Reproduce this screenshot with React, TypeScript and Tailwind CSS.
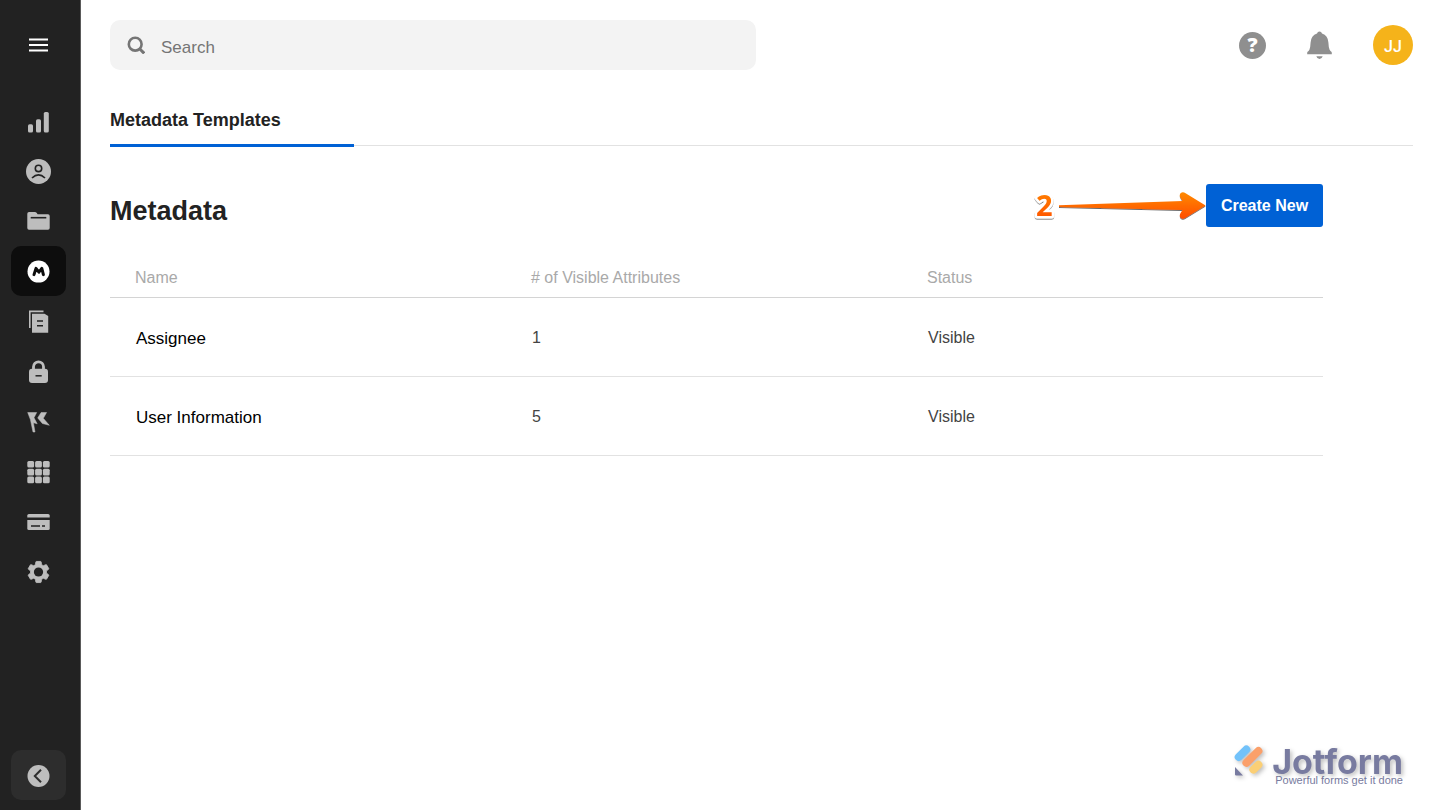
import type { ReactNode } from "react";

const navItems: { label: string; active?: boolean; icon: ReactNode }[] = [
  {
    label: "Reports",
    icon: (
      <g fill="currentColor">
        <rect x="3" y="17.3" width="5" height="8.2" rx="1.6" />
        <rect x="11" y="12.3" width="5" height="13.2" rx="1.6" />
        <rect x="18.8" y="5" width="5" height="20.5" rx="1.6" />
      </g>
    ),
  },
  {
    label: "Users",
    icon: (
      <>
        <circle cx="13.5" cy="14.5" r="12.5" fill="currentColor" />
        <circle cx="13.5" cy="11.4" r="3.2" fill="none" stroke="#222" strokeWidth="1.6" />
        <path d="M7 21Q13.5 14.8 20 21" fill="none" stroke="#222" strokeWidth="1.7" />
      </>
    ),
  },
  {
    label: "Folders",
    icon: (
      <>
        <path
          d="M4 5H9.8Q11 5 11.8 6L12.6 7.2H23Q24.7 7.2 24.7 9V21Q24.7 22.8 23 22.8H4Q2.3 22.8 2.3 21V6.8Q2.3 5 4 5Z"
          fill="currentColor"
        />
        <path d="M5.7 10.7H21.3" stroke="#222" strokeWidth="1.6" />
      </>
    ),
  },
  {
    label: "Metadata",
    active: true,
    icon: (
      <>
        <circle cx="13.5" cy="14.6" r="11" fill="currentColor" />
        <path
          d="M9 17.6L11 11.4L13.9 15.2L16.8 11.4L18.4 17.6"
          fill="none"
          stroke="#0d0d0d"
          strokeWidth="3"
          strokeLinecap="round"
          strokeLinejoin="round"
        />
      </>
    ),
  },
  {
    label: "Documents",
    icon: (
      <>
        <path d="M4.8 21V4.4H18.5" fill="none" stroke="currentColor" strokeWidth="1.6" />
        <path d="M7 6.7H19.5L23.2 9V25.8H7Z" fill="currentColor" />
        <path d="M12 14H18M12 18.8H18" stroke="#222" strokeWidth="1.5" />
      </>
    ),
  },
  {
    label: "Security",
    icon: (
      <>
        <path d="M8.5 13V9.8a5 5 0 0 1 10 0V13" fill="none" stroke="currentColor" strokeWidth="2.8" />
        <rect x="4" y="11.8" width="19" height="14.2" rx="3" fill="currentColor" />
        <path d="M10.5 18.8H16.7" stroke="#222" strokeWidth="1.5" />
      </>
    ),
  },
  {
    label: "Campaigns",
    icon: (
      <g fill="currentColor" stroke="currentColor" strokeWidth="0.5" strokeLinejoin="round">
        <path d="M2.7 5.5H11.7L9 10.7L12.2 16.8L8.4 15.8L10 25H8L5.4 12.6Z" />
        <path d="M16.1 5.5H21.6L18.3 11.3L24.3 18.3L17.4 16.5L12.7 10.9Z" />
      </g>
    ),
  },
  {
    label: "Apps",
    icon: (
      <g fill="currentColor">
        {[4, 11.8, 19.6].map((y) =>
          [2.3, 10.1, 17.9].map((x) => (
            <rect key={`${x}-${y}`} x={x} y={y} width="6.8" height="6.6" rx="1.5" />
          ))
        )}
      </g>
    ),
  },
  {
    label: "Billing",
    icon: (
      <>
        <path d="M2.3 10.4V8.6Q2.3 7 3.9 7H23.1Q24.7 7 24.7 8.6V10.4Z" fill="currentColor" />
        <path d="M2.3 13H24.7V21.4Q24.7 23 23.1 23H3.9Q2.3 23 2.3 21.4Z" fill="currentColor" />
        <path d="M6 19H15M17 19H20" stroke="#222" strokeWidth="1.6" />
      </>
    ),
  },
  {
    label: "Settings",
    icon: (
      <g transform="translate(0.3 1.8) scale(1.1)">
        <path
          d="M19.14 12.94c.04-.3.06-.61.06-.94 0-.32-.02-.64-.07-.94l2.03-1.58a.49.49 0 0 0 .12-.61l-1.92-3.32a.49.49 0 0 0-.59-.22l-2.39.96a7.03 7.03 0 0 0-1.62-.94l-.36-2.54a.48.48 0 0 0-.48-.41h-3.84a.47.47 0 0 0-.47.41l-.36 2.54c-.59.24-1.13.57-1.62.94l-2.39-.96a.48.48 0 0 0-.59.22L2.74 8.87a.47.47 0 0 0 .12.61l2.03 1.58c-.05.3-.09.63-.09.94s.02.64.07.94l-2.03 1.58a.49.49 0 0 0-.12.61l1.92 3.32c.12.22.37.29.59.22l2.39-.96c.5.38 1.03.7 1.62.94l.36 2.54c.05.24.24.41.48.41h3.84c.24 0 .44-.17.47-.41l.36-2.54a6.8 6.8 0 0 0 1.62-.94l2.39.96c.22.08.47 0 .59-.22l1.92-3.32a.47.47 0 0 0-.12-.61z"
          fill="currentColor"
          stroke="currentColor"
          strokeWidth="0.8"
        />
        <circle cx="12" cy="12" r="4.2" fill="#222" />
      </g>
    ),
  },
];

const templates = [
  { name: "Assignee", attributes: 1, status: "Visible" },
  { name: "User Information", attributes: 5, status: "Visible" },
];

function Sidebar() {
  return (
    <aside className="w-[81px] shrink-0 bg-[#222] border-r border-[#5a5a5a] pl-[11px] pr-[14px] pb-[10px] flex flex-col">
      <button type="button" aria-label="Menu" className="h-[90px] flex items-center justify-center text-white">
        <svg viewBox="0 0 19 14" className="w-[19px] h-[14px]" stroke="currentColor" strokeWidth="2">
          <path d="M0 1.5H19M0 7H19M0 12.5H19" />
        </svg>
      </button>
      <nav className="mt-[6px]">
        {navItems.map((item) => (
          <a
            key={item.label}
            href="#"
            aria-label={item.label}
            className={`h-[50px] rounded-[10px] flex items-center justify-center ${
              item.active ? "bg-[#0d0d0d] text-white" : "text-[#bdbdbd]"
            }`}
          >
            <svg viewBox="0 0 27 28" className="w-[27px] h-7">
              {item.icon}
            </svg>
          </a>
        ))}
      </nav>
      <button
        type="button"
        aria-label="Collapse sidebar"
        className="mt-auto h-[50px] rounded-[10px] bg-[#2d2d2d] text-[#bdbdbd] flex items-center justify-center"
      >
        <svg viewBox="0 0 24 24" className="w-6 h-6">
          <circle cx="11.5" cy="13" r="11" fill="currentColor" />
          <path d="M14 6.8L7.8 13L14 19.2" fill="none" stroke="#2d2d2d" strokeWidth="2" />
        </svg>
      </button>
    </aside>
  );
}

function TopBar() {
  return (
    <header className="h-[90px] flex items-center justify-between gap-10">
      <label className="flex items-center gap-4 w-full max-w-[646px] h-[50px] rounded-[10px] bg-[#f3f3f3] pl-[17px] pr-4">
        <svg viewBox="0 0 18 18" className="w-[18px] h-[18px] shrink-0 text-[#757575]" fill="none" stroke="currentColor">
          <circle cx="8.2" cy="8.2" r="6.4" strokeWidth="2.6" />
          <path d="M12.6 12.8L17.2 17.4" strokeWidth="3" />
        </svg>
        <input
          type="text"
          placeholder="Search"
          aria-label="Search"
          className="w-full h-full pt-1.5 bg-transparent outline-none text-[17px] placeholder:text-[#757575]"
        />
      </label>
      <div className="flex items-center gap-[41px] shrink-0">
        <button
          type="button"
          aria-label="Help"
          className="w-[27px] h-[27px] rounded-full bg-[#8f8f8f] text-white text-xl leading-5 font-extrabold flex items-center justify-center font-['Open_Sans',sans-serif]"
        >
          ?
        </button>
        <button type="button" aria-label="Notifications" className="text-[#8f8f8f]">
          <svg viewBox="0 0 25 28" className="w-[25px] h-7" fill="currentColor">
            <path d="M12.5 0.6Q14.4 0.6 15 2.6Q21 4.7 21.4 11.5Q21.6 16.5 22.6 18.8Q23.4 20.3 24.4 20.8Q24.8 21 24.8 22V23.2H0.2V22Q0.2 21 0.6 20.8Q1.6 20.3 2.4 18.8Q3.4 16.5 3.6 11.5Q4 4.7 10 2.6Q10.6 0.6 12.5 0.6Z" />
            <path d="M9.3 25.2H15.7Q14.8 28 12.5 28Q10.2 28 9.3 25.2Z" />
          </svg>
        </button>
        <button
          type="button"
          aria-label="Account"
          className="w-10 h-10 pt-[3px] rounded-full bg-[#f5b31a] text-white text-base font-medium font-['Roboto',sans-serif]"
        >
          JJ
        </button>
      </div>
    </header>
  );
}

function StepArrow() {
  return (
    <svg viewBox="0 -4 173 43" className="w-[173px] h-[43px]" role="img" aria-label="Step 2">
      <defs>
        <linearGradient id="arrowFill" x1="0" y1="0" x2="0" y2="1">
          <stop offset="0" stopColor="#ff8a00" />
          <stop offset="1" stopColor="#ff4d00" />
        </linearGradient>
        <filter id="arrowShadow" x="-10%" y="-20%" width="120%" height="150%">
          <feDropShadow dx="0" dy="1" stdDeviation="0.6" floodColor="#000" floodOpacity="0.6" />
        </filter>
      </defs>
      <g filter="url(#arrowShadow)" fill="url(#arrowFill)">
        <text
          x="3"
          y="28"
          className="text-[29px] font-bold font-['Open_Sans',sans-serif]"
          stroke="#fff"
          strokeWidth="5"
          strokeLinejoin="round"
          paintOrder="stroke"
        >
          2
        </text>
        <path d="M26 17.3L149.5 13.1L147.6 10.1Q145.8 6.9 147.8 5.1Q149.8 3.5 152.6 5.3L172.6 17.5L152.6 29.7Q149.8 31.5 147.8 29.9Q145.8 28.1 147.6 25.1L149.5 22.1L26 18.9Z" />
      </g>
    </svg>
  );
}

function JotformMark() {
  return (
    <div className="mt-auto self-end mr-[10px] mb-6 flex items-start text-[#787ba0]">
      <svg
        viewBox="0 0 30 32"
        className="w-[30px] h-8 drop-shadow-[2px_2px_2px_rgba(0,0,0,0.25)]"
        fill="none"
        strokeLinecap="round"
      >
        <path d="M4.7 12L12.3 4.5" stroke="#72c2fa" strokeWidth="8" />
        <path d="M12.4 17.8L24.4 6" stroke="#fba06a" strokeWidth="8" />
        <path d="M19.4 24.6L24.4 19.8" stroke="#fbcf75" strokeWidth="8" />
        <path d="M1 22L9 30.4H1.8Q1 30.4 1 29.6Z" fill="#787ba0" />
      </svg>
      <div className="ml-2 flex flex-col items-end">
        <span className="h-[29px] text-[34px] leading-[33px] font-bold font-['Inter',sans-serif] drop-shadow-[2px_2px_2px_rgba(0,0,0,0.25)]">
          Jotform
        </span>
        <span className="text-[11px] leading-3">Powerful forms get it done</span>
      </div>
    </div>
  );
}

export default function App() {
  return (
    <div className="min-h-screen flex bg-white text-[#222] font-['Liberation_Sans',Arial,sans-serif]">
      <Sidebar />
      <main className="flex-1 min-w-0 flex flex-col pl-[29px] pr-[27px]">
        <TopBar />
        <div className="h-14 border-b border-[#e2e2e2] flex" role="tablist">
          <button
            type="button"
            role="tab"
            aria-selected="true"
            className="w-[244px] h-[57px] pt-1.5 border-b-3 border-[#0061d5] text-left text-[18px] font-bold"
          >
            Metadata Templates
          </button>
        </div>

        <section className="pt-[38px] pr-[90px]">
          <div className="flex items-center justify-between">
            <h1 className="text-[27px] leading-8 font-bold pt-[10px]">Metadata</h1>
            <div className="flex items-center">
              <StepArrow />
              <button type="button" className="w-[117px] h-[43px] rounded-[3px] bg-[#0061d5] text-white text-base font-bold">
                Create New
              </button>
            </div>
          </div>

          <table className="mt-[30px] w-full table-fixed text-left text-base">
            <thead>
              <tr className="h-10 border-b border-[#d4d4d4] text-[#a9a9a9]">
                <th className="w-[396px] pl-[25px] pt-[3px] font-normal">Name</th>
                <th className="w-[396px] pl-[25px] pt-[3px] font-normal"># of Visible Attributes</th>
                <th className="pl-[25px] pt-[3px] font-normal">Status</th>
              </tr>
            </thead>
            <tbody>
              {templates.map((row) => (
                <tr key={row.name} className="h-[79px] border-b border-[#e2e2e2] text-[#444]">
                  <td className="pl-[26px] pt-1 text-[17px] text-black">{row.name}</td>
                  <td className="pl-[26px] pt-[3px]">{row.attributes}</td>
                  <td className="pl-[26px] pt-[3px]">{row.status}</td>
                </tr>
              ))}
            </tbody>
          </table>
        </section>

        <JotformMark />
      </main>
    </div>
  );
}
